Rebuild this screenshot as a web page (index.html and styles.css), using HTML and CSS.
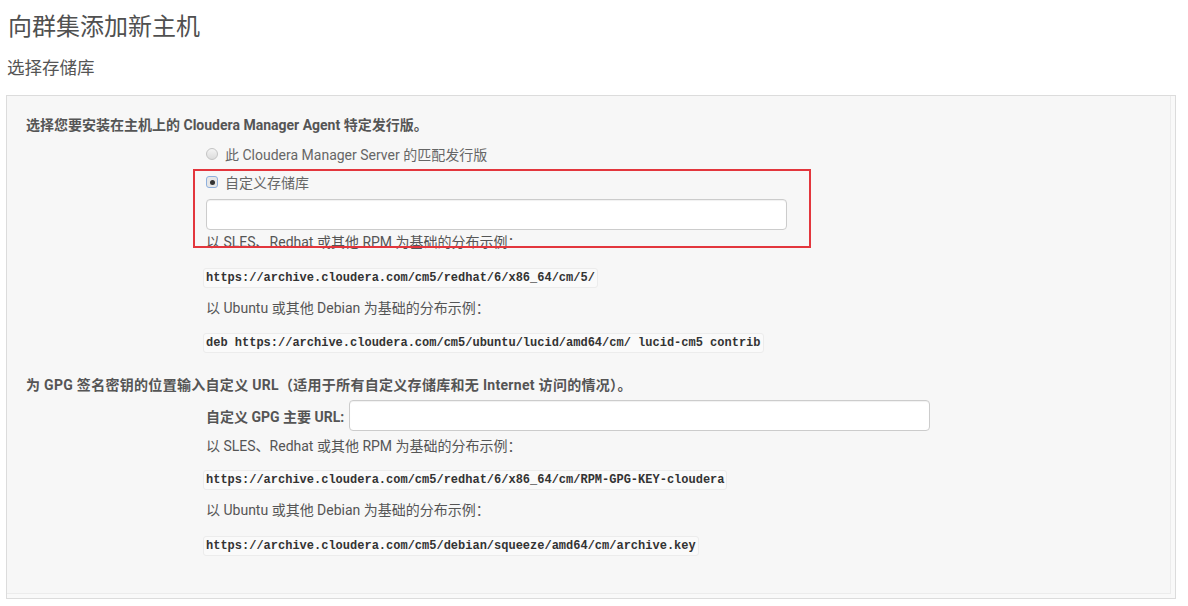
FILE: index.html
```html
<!DOCTYPE html>
<html lang="zh-CN">
<head>
<meta charset="utf-8">
<title>向群集添加新主机</title>
<link rel="stylesheet" href="styles.css">
</head>
<body>
<h1 class="title">向群集添加新主机</h1>
<h2 class="subtitle">选择存储库</h2>
<div class="panel">
  <p class="lead">选择您要安装在主机上的 Cloudera Manager Agent 特定发行版。</p>
  <div class="indent">
    <label class="radio"><span class="dot"></span>此 Cloudera Manager Server 的匹配发行版</label>
    <label class="radio"><span class="dot checked"></span>自定义存储库</label>
    <input class="text-input repo-input" type="text">
    <p class="hint first-hint">以 SLES、Redhat 或其他 RPM 为基础的分布示例：</p>
    <p class="code-line c1"><code>https://archive.cloudera.com/cm5/redhat/6/x86_64/cm/5/</code></p>
    <p class="hint h2">以 Ubuntu 或其他 Debian 为基础的分布示例：</p>
    <p class="code-line c2"><code>deb https://archive.cloudera.com/cm5/ubuntu/lucid/amd64/cm/ lucid-cm5 contrib</code></p>
  </div>
  <p class="lead lead2">为 GPG 签名密钥的位置输入自定义 URL（适用于所有自定义存储库和无 Internet 访问的情况）。</p>
  <div class="indent">
    <div class="field">
      <label class="field-label">自定义 GPG 主要 URL:</label>
      <input class="text-input gpg-input" type="text">
    </div>
    <p class="hint h3">以 SLES、Redhat 或其他 RPM 为基础的分布示例：</p>
    <p class="code-line c3"><code>https://archive.cloudera.com/cm5/redhat/6/x86_64/cm/RPM-GPG-KEY-cloudera</code></p>
    <p class="hint h4">以 Ubuntu 或其他 Debian 为基础的分布示例：</p>
    <p class="code-line c4"><code>https://archive.cloudera.com/cm5/debian/squeeze/amd64/cm/archive.key</code></p>
  </div>
  <div class="annotation"></div>
</div>
</body>
</html>
```

FILE: styles.css
```css
* { box-sizing: border-box; }
html, body { margin: 0; padding: 0; background: #fff; }
body {
  font-family: Roboto, "Noto Sans CJK SC", sans-serif;
  color: #555;
  font-size: 14px;
  width: 1188px;
  height: 606px;
  overflow: hidden;
}
.title {
  margin: 0;
  padding: 12px 0 0 8px;
  height: 42px;
  line-height: 30px;
  font-size: 24px;
  font-weight: 400;
  color: #505050;
}
.subtitle {
  margin: 0;
  padding: 0 0 0 7px;
  height: 53px;
  line-height: 52px;
  font-size: 17.5px;
  font-weight: 400;
  color: #555;
}
.panel {
  position: relative;
  margin-left: 6px;
  width: 1170px;
  height: 504px;
  background: #f7f7f7;
  border: 1px solid #dcdcdc;
  box-shadow: inset -4px -4px 0 #f9f9f9, inset -5px -5px 0 #ececec;
  padding: 19px 19px 0 19px;
}
.lead {
  margin: 0;
  height: 20px;
  line-height: 20px;
  font-size: 14px;
  font-weight: 700;
  color: #555;
  white-space: nowrap;
}
.lead2 { margin-top: 22px; letter-spacing: 0.3px; }
.indent {
  padding-left: 180px;
  display: flex;
  flex-direction: column;
  align-items: flex-start;
}
.radio {
  display: flex;
  align-items: center;
  height: 28px;
  font-size: 14px;
  color: #666;
}
.radio:first-child { margin-top: 5px; }
.dot {
  width: 12px;
  height: 12px;
  border-radius: 50%;
  border: 1px solid #c4c4c4;
  background: linear-gradient(#f4f4f4, #dcdcdc);
  margin-right: 7px;
  position: relative;
}
.dot.checked {
  border-radius: 3px;
  border: 1px solid #8fb0dd;
  background: #e6e6e6;
}
.dot.checked::after {
  content: "";
  position: absolute;
  left: 2.5px;
  top: 2.5px;
  width: 5px;
  height: 5px;
  border-radius: 50%;
  background: #333;
}
.text-input {
  display: block;
  width: 581px;
  height: 31px;
  margin: 0;
  border: 1px solid #ccc;
  border-radius: 4px;
  background: #fff;
  box-shadow: inset 0 1px 1px rgba(0,0,0,0.06);
}
.repo-input { margin-top: 3px; }
.hint {
  margin: 0;
  height: 20px;
  line-height: 20px;
  font-size: 14px;
  color: #555;
}
.first-hint { margin-top: 2px; }
.h2 { margin-top: 10px; }
.h3 { margin-top: 5px; }
.h4 { margin-top: 10px; }
.code-line {
  margin: 0;
  height: 20px;
  display: flex;
  align-items: center;
  margin-left: -3px;
}
.c1 { margin-top: 16px; }
.c2 { margin-top: 15px; }
.c3 { margin-top: 14px; }
.c4 { margin-top: 16px; }
code {
  font-family: "Liberation Mono", "DejaVu Sans Mono", monospace;
  font-weight: 700;
  font-size: 12px;
  line-height: 16px;
  color: #333;
  background: #fafafa;
  border: 1px solid #ececec;
  border-radius: 3px;
  padding: 1px 2px;
}
.field {
  display: flex;
  align-items: center;
  margin-top: 5px;
  height: 31px;
}
.field-label {
  font-weight: 700;
  font-size: 14px;
  color: #555;
  width: 143px;
  white-space: nowrap;
}
.gpg-input { width: 581px; }
.annotation {
  position: absolute;
  left: 186px;
  top: 73px;
  width: 618px;
  height: 79px;
  border: 2px solid #e3363d;
  pointer-events: none;
}
```
